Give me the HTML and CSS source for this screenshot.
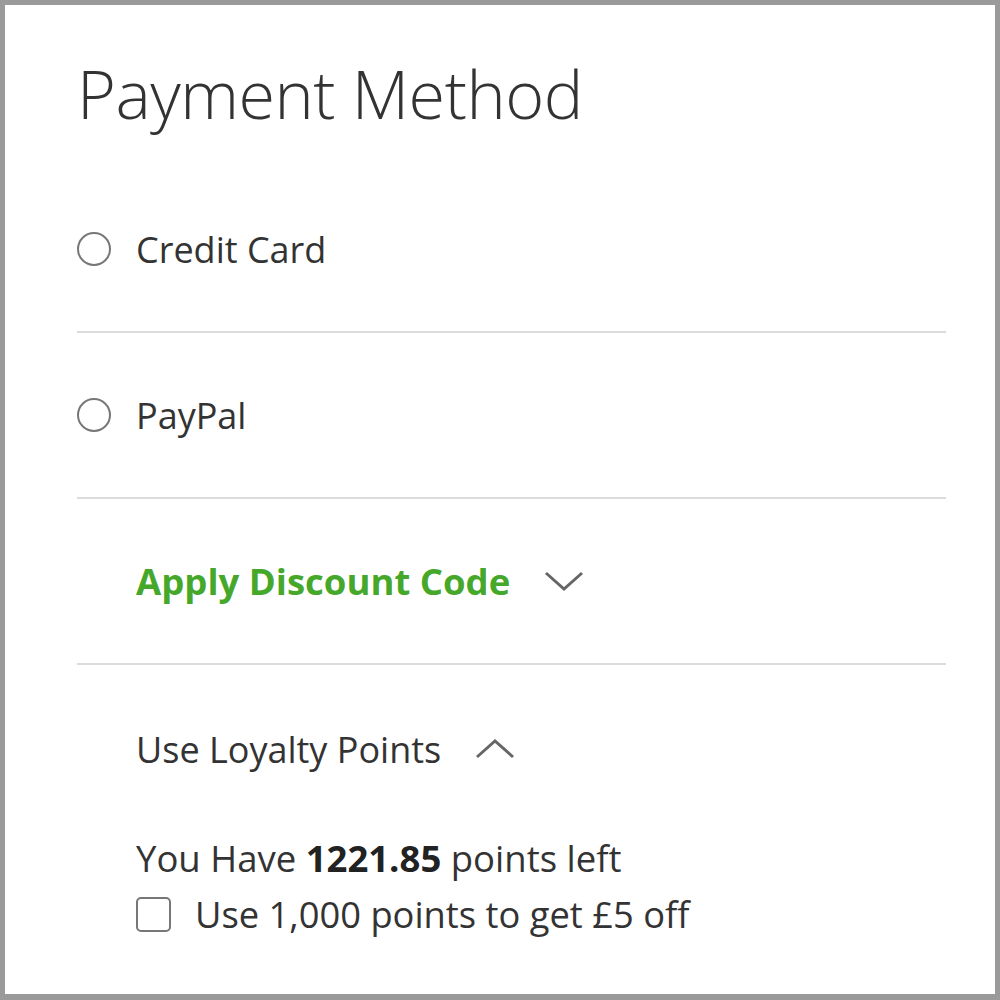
FILE: index.html
```html
<!DOCTYPE html>
<html>
<head>
<meta charset="utf-8">
<link rel="stylesheet" href="styles.css">
</head>
<body>
<div class="frame">
  <h1 class="title">Payment Method</h1>
  <div class="row">
    <span class="radio"></span>
    <span class="label">Credit Card</span>
  </div>
  <div class="row">
    <span class="radio"></span>
    <span class="label">PayPal</span>
  </div>
  <div class="row indent">
    <span class="discount">Apply Discount Code</span>
    <svg class="chev" width="40" height="22" viewBox="0 0 40 22"><path d="M2 3 L20 19 L38 3" fill="none" stroke="#666" stroke-width="3"/></svg>
  </div>
  <div class="loyalty">
    <div class="loyalty-head">
      <span class="label">Use Loyalty Points</span>
      <svg class="chev" width="40" height="22" viewBox="0 0 40 22"><path d="M2 19 L20 3 L38 19" fill="none" stroke="#666" stroke-width="3"/></svg>
    </div>
    <p class="points">You Have <b>1221.85</b> points left</p>
    <div class="check-row">
      <span class="checkbox"></span>
      <span class="label">Use 1,000 points to get £5 off</span>
    </div>
  </div>
</div>
</body>
</html>
```
FILE: styles.css
```css
* { box-sizing: border-box; }
html, body { margin: 0; padding: 0; background: #fff; }
.frame {
  width: 1000px;
  height: 1000px;
  border: 5px solid #9a9a9a;
  border-bottom-width: 6px;
  padding: 0 49px 0 72px;
  font-family: "Open Sans", "Noto Sans", sans-serif;
  color: #333;
  overflow: hidden;
}
.title {
  margin: 0;
  height: 162px;
  padding-top: 55px;
  font-size: 66.5px;
  line-height: 1;
  font-weight: 300;
  color: #333;
  letter-spacing: -0.5px;
}
.row {
  height: 166px;
  border-bottom: 2px solid #dcdcdc;
  display: flex;
  align-items: center;
  gap: 25px;
}
.row.indent { padding-left: 59px; gap: 34px; }
.radio {
  width: 34px;
  height: 34px;
  border: 2px solid #777;
  border-radius: 50%;
  flex: none;
}
.label {
  font-size: 36px;
  color: #333;
}
.discount {
  font-size: 36.5px;
  font-weight: 700;
  color: #46a82b;
}
.chev { flex: none; display: block; }
.loyalty { padding-left: 59px; padding-top: 62px; }
.loyalty-head { display: flex; align-items: center; gap: 34px; height: 44px; }
.points {
  margin: 64px 0 0;
  font-size: 36.5px;
  line-height: 46px;
}
.points b { font-weight: 700; color: #222; }
.check-row {
  display: flex;
  align-items: center;
  gap: 24px;
  margin-top: 8px;
}
.check-row .label { font-size: 36.3px; }
.checkbox {
  width: 35px;
  height: 35px;
  border: 2px solid #777;
  border-radius: 5px;
  flex: none;
}
```
